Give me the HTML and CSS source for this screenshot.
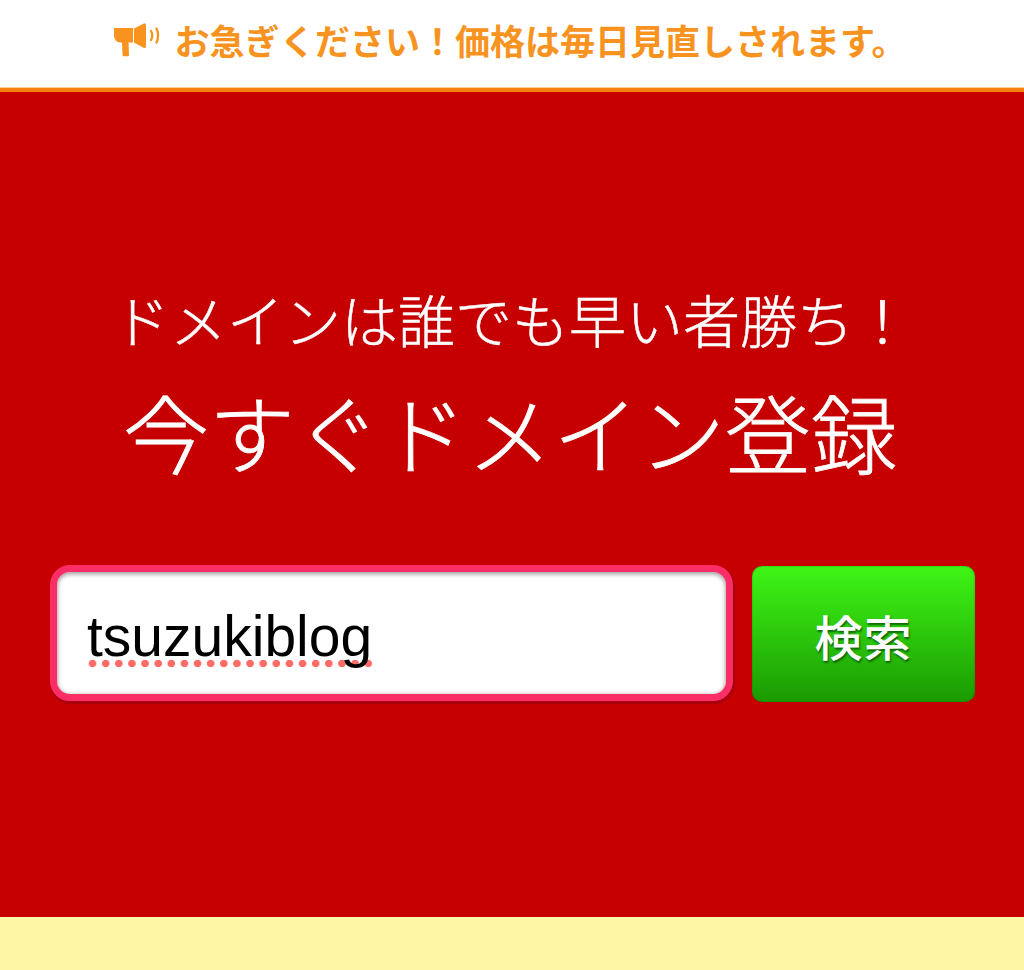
FILE: index.html
```html
<!DOCTYPE html>
<html lang="ja">
<head>
<meta charset="utf-8">
<title>ドメイン登録</title>
<link rel="stylesheet" href="styles.css">
</head>
<body>
<header class="notice">
  <svg class="notice-icon" viewBox="0 0 46 34" aria-hidden="true">
    <path class="mega" d="M0 5h19v14.500H6C2.500 19.500 0 16 0 12z"/>
    <path class="mega" d="M8 19h6.500l.5 13c0 .8-.5 1.300-1.300 1.300H10c-.8 0-1.300-.5-1.400-1.300z"/>
    <path class="mega" d="M20 5.500 29.500.8c1.500-.7 2.500 0 2.500 1.200v21.500c0 1.300-1 1.800-2.500 1.200L20 19.500z"/>
    <path class="wave" d="M37 8c1.400 2.500 1.400 6.500 0 9"/>
    <path class="wave" d="M42.500 5.500c2.100 4 2.100 10 0 14"/>
  </svg>
  <span class="notice-text">お急ぎください！価格は毎日見直しされます。</span>
</header>
<main class="hero">
  <p class="lead">ドメインは誰でも早い者勝ち！</p>
  <h1 class="title">今すぐドメイン登録</h1>
  <form class="search">
    <div class="field"><span class="query">tsuzukiblog</span></div>
    <button class="submit" type="button">検索</button>
  </form>
</main>
<footer class="strip"></footer>
</body>
</html>
```

FILE: styles.css
```css
* { box-sizing: border-box; }
html, body { margin: 0; padding: 0; }
body {
  width: 1024px;
  height: 970px;
  overflow: hidden;
  display: flex;
  flex-direction: column;
  background: #fff6a5;
  font-family: "Liberation Sans", "Noto Sans CJK JP", sans-serif;
}
.notice {
  height: 92px;
  flex: none;
  background: #fff;
  border-bottom: 4px solid #f57f0f;
  box-shadow: inset 0 -1px #ffcf9a;
  display: flex;
  align-items: center;
  justify-content: center;
  gap: 14px;
  padding: 0 3px 9px 0;
  color: #f7931e;
}
.notice-icon { width: 46px; height: 34px; flex: none; margin-top: 1px; }
.mega { fill: #f7931e; }
.wave { fill: none; stroke: #f7931e; stroke-width: 2.300; stroke-linecap: round; }
.notice-text { font-size: 35px; font-weight: 700; line-height: 40px; font-family: "Noto Sans CJK JP", sans-serif; }
.hero {
  height: 825px;
  flex: none;
  background: #c60000;
  color: #fff;
  display: flex;
  flex-direction: column;
  align-items: center;
  padding-top: 196px;
}
.lead {
  margin: 0;
  font-family: "Noto Sans CJK JP", sans-serif;
  font-size: 57px;
  font-weight: 300;
  -webkit-text-stroke: .5px #fff;
  line-height: 60px;
}
.title {
  margin: 33px 4px 0 0;
  font-family: "Noto Sans CJK JP", sans-serif;
  font-size: 86px;
  font-weight: 300;
  -webkit-text-stroke: .8px #fff;
  line-height: 100px;
}
.search {
  margin-top: 84px;
  width: 926px;
  padding-left: 1px;
  display: flex;
  justify-content: space-between;
  align-items: flex-start;
}
.field {
  width: 683px;
  height: 136px;
  background: #fff;
  border: 7px solid #fb2d66;
  border-radius: 20px;
  box-shadow: inset 0 2px 5px rgba(0,0,0,.35), inset 0 0 4px rgba(0,0,0,.15), 1px 2px 1px 1px #a80010;
  padding: 31px 30px 0;
}
.query {
  display: inline-block;
  font-size: 57px;
  line-height: 66px;
  color: #000;
  background: radial-gradient(circle at 50% 50%, #ff6b66 3.400px, rgba(255,107,102,0) 4.100px) -1px calc(100% - 1px) / 13.130px 9px repeat-x;
}
.submit {
  width: 223px;
  height: 136px;
  margin-top: 1px;
  border: 0;
  border-radius: 10px;
  background: linear-gradient(#3ff616, #1a9a02);
  box-shadow: inset 0 0 2px rgba(0,80,0,.5);
  color: #fff;
  font-family: "Noto Sans CJK JP", sans-serif;
  font-size: 48px;
  font-weight: 500;
  letter-spacing: 1px;
  text-shadow: 1px 2px 2px rgba(0,60,0,.7);
  padding: 2px 0 0;
}
.strip { flex: 1; background: #fff6a5; }
```
